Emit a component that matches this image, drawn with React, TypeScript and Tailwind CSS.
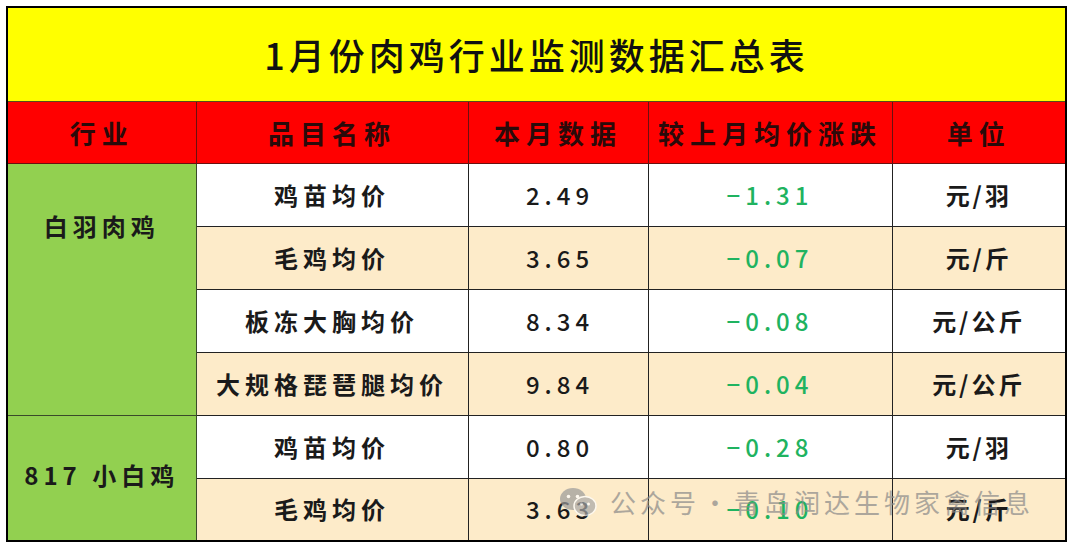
import React from 'react';

const font = { fontFamily: '"Noto Sans CJK SC", "Noto Sans", sans-serif' };

interface Row {
  name: string;
  value: string;
  change: string;
  unit: string;
}

const groups: { label: string; top: boolean; rows: Row[] }[] = [
  {
    label: '白羽肉鸡',
    top: true,
    rows: [
      { name: '鸡苗均价', value: '2.49', change: '−1.31', unit: '元/羽' },
      { name: '毛鸡均价', value: '3.65', change: '−0.07', unit: '元/斤' },
      { name: '板冻大胸均价', value: '8.34', change: '−0.08', unit: '元/公斤' },
      { name: '大规格琵琶腿均价', value: '9.84', change: '−0.04', unit: '元/公斤' },
    ],
  },
  {
    label: '817 小白鸡',
    top: false,
    rows: [
      { name: '鸡苗均价', value: '0.80', change: '−0.28', unit: '元/羽' },
      { name: '毛鸡均价', value: '3.63', change: '−0.10', unit: '元/斤' },
    ],
  },
];

function WeChatIcon() {
  return (
    <svg width="40" height="30" viewBox="0 0 40 30">
      <ellipse cx="15" cy="12" rx="13" ry="11" fill="#9a9a9a" />
      <circle cx="10.5" cy="9.5" r="1.8" fill="#fff" />
      <circle cx="19.5" cy="9.5" r="1.8" fill="#fff" />
      <ellipse cx="27" cy="19" rx="11" ry="9.5" fill="#a8a8a8" stroke="#fff" strokeWidth="1.5" />
      <circle cx="23.5" cy="17" r="1.5" fill="#fff" />
      <circle cx="30.5" cy="17" r="1.5" fill="#fff" />
    </svg>
  );
}

export default function App() {
  let index = 0;
  return (
    <div className="relative w-[1074px] h-[546px] bg-white p-[6px]" style={font}>
      <table className="w-[1061px] border-collapse border-2 border-black table-fixed">
        <colgroup>
          <col className="w-[189px]" />
          <col className="w-[272px]" />
          <col className="w-[180px]" />
          <col className="w-[244px]" />
          <col className="w-[174px]" />
        </colgroup>
        <tbody>
          <tr className="h-[94px] bg-[#ffff00]">
            <td colSpan={5} className="text-center text-[36px] font-medium tracking-[4px] text-[#111] border-b border-[#5a4a1a]">
              1月份肉鸡行业监测数据汇总表
            </td>
          </tr>
          <tr className="h-[62px] bg-[#ff0000] text-[26px] font-bold text-[#2a0a0a] tracking-[6px]">
            <td className="text-center border border-[#6a1010]">行业</td>
            <td className="text-center border border-[#6a1010]">品目名称</td>
            <td className="text-center border border-[#6a1010]">本月数据</td>
            <td className="text-center border border-[#6a1010] tracking-[6px]">较上月均价涨跌</td>
            <td className="text-center border border-[#6a1010]">单位</td>
          </tr>
          {groups.map((g) =>
            g.rows.map((r, i) => {
              const beige = index++ % 2 === 1;
              const bg = beige ? 'bg-[#fdebc9]' : 'bg-white';
              return (
                <tr key={g.label + i} className={`h-[63px] ${bg} text-[24px] font-bold text-[#1a1a1a]`}>
                  {i === 0 && (
                    <td
                      rowSpan={g.rows.length}
                      className={`bg-[#92d050] border border-[#3a4a2a] text-center tracking-[5px] text-[24px] font-bold whitespace-nowrap ${
                        g.top ? 'align-top pt-[44px]' : 'align-middle pb-[6px]'
                      }`}
                    >
                      {g.label}
                    </td>
                  )}
                  <td className="text-center tracking-[5px] border border-[#222] whitespace-nowrap">{r.name}</td>
                  <td className="text-center tracking-[5px] border border-[#222] font-medium pl-[4px]">{r.value}</td>
                  <td className="text-center tracking-[5px] border border-[#222] font-medium text-[#1fb360]">
                    {r.change}
                  </td>
                  <td className="text-center tracking-[3px] border border-[#222]">{r.unit}</td>
                </tr>
              );
            })
          )}
        </tbody>
      </table>
      <div className="absolute left-[558px] top-[482px] flex items-center gap-[12px] opacity-70 pointer-events-none">
        <WeChatIcon />
        <span className="text-[26px] text-[#8a8a8a] tracking-[4px]">
          公众号<span className="mx-[2px]">·</span>青岛润达生物家禽信息
        </span>
      </div>
    </div>
  );
}
